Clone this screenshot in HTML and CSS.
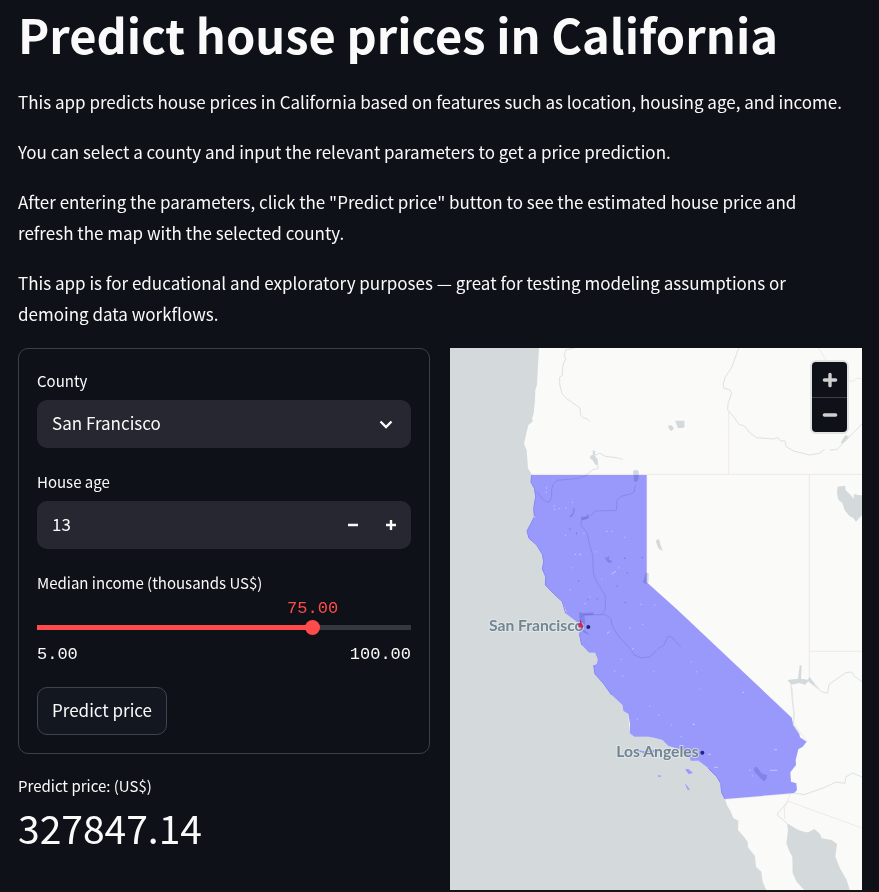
FILE: index.html
```html
<!DOCTYPE html>
<html lang="en">
<head>
<meta charset="utf-8">
<meta name="viewport" content="width=device-width, initial-scale=1">
<title>Predict house prices in California</title>
<link rel="stylesheet" href="styles.css">
</head>
<body>
<main class="app">
  <header class="intro">
    <h1>Predict house prices in California</h1>
    <p>This app predicts house prices in California based on features such as location, housing age, and income.</p>
    <p>You can select a county and input the relevant parameters to get a price prediction.</p>
    <p>After entering the parameters, click the "Predict price" button to see the estimated house price and refresh the map with the selected county.</p>
    <p>This app is for educational and exploratory purposes — great for testing modeling assumptions or demoing data workflows.</p>
  </header>
  <div class="columns">
    <section class="left">
      <form class="card">
        <div class="field">
          <label for="county">County</label>
          <div class="control">
            <select id="county"><option>San Francisco</option><option>Los Angeles</option></select>
            <svg class="chevron" viewBox="0 0 20 20" aria-hidden="true"><path d="M4.500 7.500l5.500 5.500 5.500-5.500"/></svg>
          </div>
        </div>
        <div class="field">
          <label for="age">House age</label>
          <div class="control">
            <input id="age" type="text" inputmode="numeric" value="13">
            <button class="step" type="button" aria-label="Decrease"><svg viewBox="0 0 12 12"><path d="M1 6h10"/></svg></button>
            <button class="step" type="button" aria-label="Increase"><svg viewBox="0 0 12 12"><path d="M1 6h10M6 1v10"/></svg></button>
          </div>
        </div>
        <div class="slider-field" style="--pos: 73.7%">
          <label for="income">Median income (thousands US$)</label>
          <div class="value-row"><output for="income">75.00</output></div>
          <div class="track"><input id="income" type="range" min="5" max="100" value="75"></div>
          <div class="ticks"><span>5.00</span><span>100.00</span></div>
        </div>
        <button class="submit" type="button">Predict price</button>
      </form>
      <div class="metric">
        <div class="metric-label">Predict price: (US$)</div>
        <div class="metric-value">327847.14</div>
      </div>
    </section>
    <section class="map" aria-label="Map of California">
      <svg class="map-canvas" viewBox="0 0 1236 1626">
        <rect class="water" width="1236" height="1626"/>
        <path class="land" d="M267 0L264 50 261 111 256 125 255 156 251 196 246 212 249 220 235 231 228 261 222 288 230 306 234 361 245 379 245 403 253 421 257 446 251 481 253 506 243 526 231 549 237 571 260 591 277 619 281 641 277 663 287 686 286 711 310 736 337 761 349 791 370 814 385 826 388 856 395 891 417 914 435 914 443 934 440 948 431 952 435 978 460 1006 485 1041 517 1071 520 1089 535 1098 539 1156 553 1166 595 1166 615 1170 637 1176 655 1194 690 1204 720 1231 745 1238 775 1261 800 1286 812 1306 815 1334 825 1353 832 1374 840 1386 850 1410 865 1418 864 1446 880 1464 893 1481 894 1498 915 1524 918 1556 934 1571 938 1601 951 1631H1236V0Z"/>
        <path class="water" d="M1011 1426L1045 1446 1067 1453 1076 1452 1093 1443 1110 1458 1115 1471 1145 1476 1161 1488 1156 1526 1170 1561 1190 1596 1201 1631H1067L1040 1601 1028 1576 1027 1526 1018 1510 1009 1486 1014 1446Z"/>
        <g class="border">
          <path d="M245 379H1236M836 379V190M1078 379V992M1078 910H1236M590 381V703L1025 1109M825 1354L1033 1336M1015 1360L1236 1440M1106 0L1128 36M1190 97L1210 100 1219 91 1236 92M1023 1336L1011 1362 1003 1382 1004 1412M1027 1020L1032 1130 1072 1180"/>
        </g>
        <path class="state" d="M245 381H590V703L683 786 1025 1109 1030 1131 1047 1154 1050 1168 1070 1181 1058 1196 1045 1204 1037 1236 1038 1251 1021 1273 1023 1301 1039 1306 1041 1326 1033 1335 825 1353 815 1334 812 1306 800 1286 775 1261 745 1238 720 1231 690 1204 655 1194 637 1176 615 1170 595 1166 553 1166 539 1156 540 1128 535 1098 520 1089 517 1071 485 1041 460 1006 435 978 431 952 440 948 443 934 435 914 417 914 395 891 388 856 385 826 370 814 347 796 349 791 337 761 310 736 286 711 287 686 277 663 281 641 277 619 260 591 237 571 231 549 243 526 253 506 251 481 257 446 253 421 243 403Z"/>
        <path class="coast" d="M245 381L243 403 253 421 257 446 251 481 253 506 243 526 231 549 237 571 260 591 277 619 281 641 277 663 287 686 286 711 310 736 337 761 347 796M388 856L395 891M431 952L435 978 460 1006 485 1041M775 1261L800 1286 812 1306 815 1334 825 1353"/>
        <path class="state" d="M553 1206L568 1205 578 1210 594 1207 625 1206 622 1216 606 1212 594 1213 584 1220 576 1213 563 1212ZM720 1229L745 1238 722 1238ZM705 1264L715 1263 729 1275 716 1278ZM704 1305L710 1312 721 1327 712 1324ZM624 1281L636 1284 626 1288Z"/>
        <g class="river">
          <path d="M373 1L347 5 343 20 347 34 341 45 338 58 337 82 329 87 329 108 336 137 350 152 390 180 392 202 400 209 411 212 420 221M518 334L500 329 466 325 449 315 435 322M443 350L444 362 428 365 412 379"/>
          <path d="M866 0L846 56 825 89 820 108 822 121 839 125 845 136 834 166 833 186 850 205 867 229 883 234 897 252 919 269 971 273 984 269 992 279 1004 278 1009 296 1031 309 1079 321 1107 316 1124 304M1138 306L1160 305 1180 285 1236 228"/>
          <path d="M1236 1001L1222 991 1214 986 1205 972 1187 974 1137 1009 1133 1036 1112 1030 1080 990 1067 1007 1052 998 1020 1000M1023 1010L1027 1060 1033 1096 1030 1130 1050 1160M1033 1335L1062 1340 1120 1320 1158 1302 1185 1306 1187 1287 1208 1275 1236 1287M1015 1360L984 1394 983 1402 1011 1426"/>
        </g>
        <g class="inland">
          <path d="M428 307L436 310 434 323 443 334 444 350 436 350 428 337 420 331 421 323 429 320ZM675 218H703V232L705 235 699 240H684ZM654 233L665 232 672 241 664 250 656 241ZM1163 416L1185 413 1187 427 1202 441 1211 452 1212 438 1224 441 1236 442V502L1228 510 1218 521 1210 510 1199 505 1184 487 1177 465 1165 455 1161 434ZM617 578L627 572 631 589 638 610 625 601ZM1173 283L1186 261 1197 266 1187 278 1174 288ZM1012 996L1044 992 1049 952 1055 953 1053 992 1074 995 1078 985 1096 1013 1108 1027 1074 1000 1065 1010 1048 1005 1024 1010Z"/>
        </g>
        <g class="state-river">
          <path d="M412 381L386 391 343 395 320 397 309 409 305 425 305 448 298 461 290 463 277 453 260 430M556 410L553 432 541 438 513 445 501 457 499 487 435 489 418 507 397 514 392 530 411 554 420 595 428 620 430 675 442 705 457 728 466 742V785L452 800 400 800 392 807M430 800L466 800 483 812 486 832 505 864 541 902 553 921 575 930 600 926 619 908M624 902L641 892 655 864 669 870 692 898"/>
        </g>
        <g class="lake">
          <path d="M549 370Q557 362 566 370V391Q561 407 552 399ZM370 480L375 483 371 498 365 508 357 506 368 496ZM392 506L409 505 413 497 417 504 413 513 394 517ZM463 625L470 629 478 624 477 636 485 637 485 645 475 644 468 636ZM587 675H596V702L586 709 579 702ZM387 792L400 795 431 793 430 801 403 803 406 824 398 842 413 854 420 862 399 852 389 824ZM913 1259L920 1256 935 1276 952 1282 948 1295 941 1300 928 1287 912 1270Z"/>
        </g>
        <path class="fleck" d="M289 418v4M289 431v4M310 474h4M325 482h4M345 480h4M312 484h4M366 463h3M374 619h4M388 619h6M345 562h3M400 556h3M469 550h4M485 550h4M523 568h3M438 610v3M508 658l-4 3M498 670l-14 8M455 692v3M366 658v3M361 724v3M405 765v4M420 745v3M571 769h4M614 769v4M538 840h4M577 829h3M471 856l8-5M545 905l7-5M512 934h3M494 967v4M517 982l4 3M611 970v3M599 1072v3M562 1111v4M724 940v3M740 970v3M750 1025l2-3M877 1033h5M625 1100l4 3M664 1129v3M690 1163l5 5M727 1129h8M972 1205h9M792 1258h11M960 1267h22M775 1219h8M898 1267h4M908 1282v3M251 507h5"/>
        <path class="speck" d="M358 543h3M378 556h3M525 629v4M532 673v3M386 697v3M501 713v3M577 627v3M414 754v3M526 762v3M441 751v3"/>
        <circle class="city" cx="415" cy="837" r="6"/>
        <circle class="city" cx="757" cy="1214" r="6"/>
        <text class="place" x="117" y="850">San Francisco</text>
        <text class="place" x="499" y="1228">Los Angeles</text>
        <path class="selected" d="M390 815L394 818 395 826 401 836 398 839 386 838 384 828 390 825Z"/>
      </svg>
      <div class="zoom">
        <button type="button" aria-label="Zoom in"><svg viewBox="0 0 16 16"><path d="M3 8h10M8 3v10"/></svg></button>
        <button type="button" aria-label="Zoom out"><svg viewBox="0 0 16 16"><path d="M3 8h10"/></svg></button>
      </div>
    </section>
  </div>
</main>
</body>
</html>
```
FILE: styles.css
```css
* { box-sizing: border-box; }
html { background: #141415; }
body {
  margin: 0;
  color: #fafafa;
  font-family: "Noto Sans CJK SC", "Noto Sans", sans-serif;
  font-size: 17px;
  line-height: 31px;
}
.app {
  min-height: calc(100vh - 2px);
  padding: 0 17px 0 18px;
  background: #0e1117;
}
h1 {
  margin: 0;
  padding: 2px 0 20px;
  font-size: 47px;
  line-height: 64px;
  font-weight: 700;
}
p {
  margin: 0 0 19px;
  padding-right: 20px;
}
.columns {
  display: grid;
  grid-template-columns: 1fr 1fr;
  gap: 20px;
  align-items: start;
}
.card {
  display: flex;
  flex-direction: column;
  gap: 20px;
  padding: 18px;
  border: 1px solid #3e4044;
  border-radius: 10px;
}
label, .metric-label {
  display: block;
  font-size: 15px;
  line-height: 28px;
}
.field { display: grid; gap: 5px; }
.control {
  display: flex;
  align-items: center;
  position: relative;
  height: 48px;
  border-radius: 10px;
  background: #262730;
  overflow: hidden;
}
select, input, button {
  margin: 0;
  border: 0;
  background: none;
  color: inherit;
  font: inherit;
}
select, .control input {
  appearance: none;
  flex: 1;
  min-width: 0;
  height: 48px;
  padding: 0 15px 3px;
}
svg { display: block; }
.chevron {
  position: absolute;
  right: 15px;
  width: 20px;
  height: 20px;
  pointer-events: none;
}
.chevron path, .step path {
  fill: none;
  stroke: #fafafa;
  stroke-width: 2.4;
}
.step {
  display: grid;
  place-items: center;
  width: 38px;
  height: 48px;
  padding: 0 2px 0 0;
}
.step svg { width: 12px; height: 12px; }
.value-row {
  position: relative;
  height: 23px;
}
output, .ticks {
  font-family: "Liberation Mono", monospace;
  font-size: 17px;
  line-height: 24px;
}
output {
  position: absolute;
  left: var(--pos);
  transform: translateX(-50%);
  color: #ff4b4b;
}
.track {
  display: flex;
  height: 15px;
  background: linear-gradient(to right, #ff4b4b var(--pos), #36383f var(--pos)) center / 100% 5px no-repeat;
}
.track input {
  appearance: none;
  flex: 1;
  height: 15px;
  margin: 0 -7px;
}
.track input::-webkit-slider-thumb {
  appearance: none;
  width: 15px;
  height: 15px;
  border-radius: 50%;
  background: #ff4b4b;
}
.ticks {
  display: flex;
  justify-content: space-between;
  margin-top: 8px;
}
.submit {
  align-self: flex-start;
  height: 48px;
  padding: 0 14px 3px;
  border: 1px solid #41444c;
  border-radius: 10px;
  background: #131720;
}
.metric { padding-top: 18px; }
.metric-value {
  font-size: 39px;
  line-height: 54px;
}
.map { position: relative; }
.map-canvas { width: 100%; height: auto; }
.water { fill: #d4dadc; }
.land { fill: #fafaf8; }
.state { fill: #9999fc; }
.inland { fill: #d4dadc; }
.lake { fill: #d6dcea; mix-blend-mode: multiply; }
.border, .river, .state-river, .coast, .fleck, .speck { fill: none; stroke-width: 3; }
.border { stroke: #f2e8e8; }
.river { stroke: #dde2e4; }
.state-river { stroke: #8789ea; }
.coast { stroke: #8585fa; }
.fleck { stroke: #c4c4fb; }
.speck { stroke: #6264df; }
.selected { fill: #c22a62; }
.city { fill: #24247e; }
.place {
  fill: #728592;
  stroke: #e6eaeb;
  stroke-opacity: 0.7;
  stroke-width: 6px;
  paint-order: stroke;
  font-family: Lato, sans-serif;
  font-size: 47px;
  font-weight: 700;
}
.zoom {
  position: absolute;
  top: 12px;
  right: 13px;
  width: 39px;
  border: 2px solid #e2e2e1;
  border-radius: 6px;
  background: #0e1117;
}
.zoom button {
  display: grid;
  place-items: center;
  width: 100%;
  height: 35px;
  padding: 0;
}
.zoom button + button { border-top: 1px solid #3e4044; }
.zoom svg { width: 18px; height: 18px; }
.zoom path {
  stroke: #cfcfcf;
  stroke-width: 3;
  stroke-linecap: round;
}
```
